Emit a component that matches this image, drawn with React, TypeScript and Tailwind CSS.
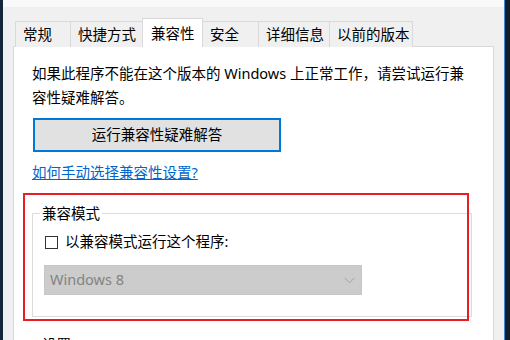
import React from 'react';

// property sheet tabs, widths taken from the screenshot
const tabs = [
  { label: '常规', width: 'w-[55px]' },
  { label: '快捷方式', width: 'w-[72px]' },
  { label: '兼容性', width: 'w-[61px]', active: true },
  { label: '安全', width: 'w-[55px]' },
  { label: '详细信息', width: 'w-[71px]' },
  { label: '以前的版本', width: 'w-[84px]', last: true },
];

const TabBar = () => (
  <div className="relative z-10 -mb-px mt-[11px] flex h-[29px] shrink-0 items-end pl-[12px]">
    {tabs.map((tab, i) =>
      tab.active ? (
        <div
          key={tab.label}
          className={`${tab.width} h-[29px] border-x border-t border-[#d9d9d9] bg-white pl-[8px] pt-px leading-[26px]`}
        >
          {tab.label}
        </div>
      ) : (
        <div
          key={tab.label}
          className={`${tab.width} h-[26px] border-t border-[#d9d9d9] bg-[#f0f0f0] pl-[7px] leading-[25px] ${
            tabs[i - 1]?.active ? '' : 'border-l'
          } ${tab.last ? 'border-r' : ''}`}
        >
          {tab.label}
        </div>
      )
    )}
  </div>
);

const Chevron = () => (
  <svg width="11" height="7" viewBox="0 0 11 7" fill="none">
    <path d="M0.5 0.8 L5.5 5.8 L10.5 0.8" stroke="#a3a3a3" strokeWidth="1" />
  </svg>
);

const App = () => (
  <div className="flex h-[340px] w-[510px] overflow-hidden font-['Noto_Sans','Noto_Sans_CJK_SC',sans-serif] text-[14.5px] text-black">
    <div className="w-[3px] bg-[#15263a]" />
    <div className="flex flex-1 flex-col overflow-hidden bg-[#f0f0f0]">
      <div className="h-[7px] shrink-0 bg-[#f9f9f9]" />
      <TabBar />
      <div className="relative mx-[10px] flex-1 shrink-0 border border-[#d9d9d9] bg-white pl-[18px] pt-[14px]">
        <p className="whitespace-nowrap leading-[24px]">
          如果此程序不能在这个版本的 Windows 上正常工作，请尝试运行兼
          <br />
          容性疑难解答。
        </p>
        <button className="ml-px mt-[9px] flex h-[34px] w-[248px] items-center justify-center border-2 border-[#0078d7] bg-[#e1e1e1]">
          运行兼容性疑难解答
        </button>
        <a className="mt-[8px] block w-fit leading-[24px] text-[#0066cc] underline">
          如何手动选择兼容性设置?
        </a>

        <fieldset className="mt-[17px] w-[440px] border border-[#dcdcdc]">
          <legend className="ml-[7px] px-[2px] leading-[24px]">兼容模式</legend>
          <div className="pb-[21px] pl-[12px] pt-[5px]">
            <label className="flex h-[24px] items-center">
              <span className="h-[13px] w-[13px] border border-[#333333] bg-white" />
              <span className="ml-[7px]">以兼容模式运行这个程序:</span>
            </label>
            <div className="-ml-px mt-[11px] flex h-[30px] w-[318px] items-center justify-between border border-[#c6c6c6] bg-[#cccccc] pl-[5px] pr-[6px] text-[#838383]">
              <span>Windows 8</span>
              <Chevron />
            </div>
          </div>
        </fieldset>

        <p className="mt-[15px] pl-[10px] leading-[24px]">设置</p>

        {/* red annotation frame drawn over the group box */}
        <div className="absolute left-[9px] top-[146px] h-[128px] w-[446px] border-2 border-[#ec1c24]" />
      </div>
    </div>
    <div className="w-px bg-[#3d89d4]" />
    <div className="w-[5px] bg-[#0f1e2c]" />
  </div>
);

export default App;
